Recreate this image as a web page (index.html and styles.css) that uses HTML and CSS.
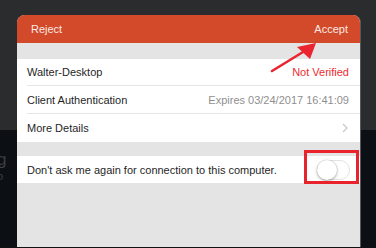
FILE: index.html
```
<!DOCTYPE html>
<html>
<head>
<meta charset="utf-8">
<link rel="stylesheet" href="styles.css">
</head>
<body>
<div class="screen">
  <div class="backdrop-top"></div>
  <div class="backdrop-bottom"><span class="ghost">g t</span><span class="ghost small">o</span></div>
  <div class="sheet">
    <div class="header">
      <span>Reject</span>
      <span>Accept</span>
    </div>
    <div class="group first">
      <div class="row"><span class="label">Walter-Desktop</span><span class="value red">Not Verified</span></div>
      <div class="row"><span class="label">Client Authentication</span><span class="value gray">Expires 03/24/2017 16:41:09</span></div>
      <div class="row last"><span class="label">More Details</span>
        <svg class="chevron" width="6" height="10" viewBox="0 0 6 10"><path d="M1 1 L5 5 L1 9" fill="none" stroke="#c7c7cc" stroke-width="1.2"/></svg>
      </div>
    </div>
    <div class="group second">
      <div class="row last"><span class="label">Don't ask me again for connection to this computer.</span>
        <span class="toggle"><span class="knob"></span></span>
      </div>
    </div>
  </div>
  <div class="highlight"></div>
  <svg class="arrow" width="376" height="248" viewBox="0 0 376 248">
    <line x1="272" y1="71" x2="303" y2="52" stroke="#ea2530" stroke-width="2.6" stroke-linecap="round"/>
    <polygon points="316,43 297,47 310,59" fill="#ea2530"/>
  </svg>
  <div class="bottom-line"></div>
</div>
</body>
</html>
```
FILE: styles.css
```
* { box-sizing: border-box; }
html, body { margin: 0; padding: 0; }
body {
  width: 376px;
  height: 248px;
  overflow: hidden;
  font-family: "Liberation Sans", Arial, sans-serif;
  background: #0c1014;
}
.screen {
  position: relative;
  width: 376px;
  height: 248px;
  display: flex;
  flex-direction: column;
}
.backdrop-top {
  height: 130px;
  background: #2b2c2e;
}
.backdrop-bottom {
  flex: 1;
  background: #0c1014;
  position: relative;
  overflow: hidden;
}
.ghost {
  position: absolute;
  left: -3px;
  top: 20px;
  color: #3c3f44;
  font-size: 17px;
  letter-spacing: 3px;
}
.ghost.small {
  top: 40px;
  left: -3px;
  font-size: 11px;
}
.sheet {
  position: absolute;
  left: 17px;
  top: 15px;
  width: 344px;
  height: 232px;
  background: #e4e4e4;
  border-radius: 8px 8px 0 0;
  overflow: hidden;
  border-right: 1px solid #55585c;
}
.header {
  height: 28px;
  background: #d24a2a;
  color: #fbe9e4;
  font-size: 11px;
  display: flex;
  align-items: center;
  justify-content: space-between;
  padding: 0 12px 0 14px;
}
.group {
  background: #fff;
  padding-left: 10px;
}
.group.first { margin-top: 16px; }
.group.second { margin-top: 14px; }
.row {
  height: 28px;
  display: flex;
  align-items: center;
  justify-content: space-between;
  padding-right: 11px;
  border-bottom: 1px solid #e6e6e6;
  font-size: 11px;
  color: #1f1f1f;
}
.group.first .row:first-child { height: 27px; }
.row.last { border-bottom: none; }
.group.second .row { height: 27px; padding-right: 10px; }
.value.red { color: #ee2b30; }
.value.gray { color: #8f8f8f; }
.chevron { margin-right: 1px; }
.toggle {
  position: relative;
  width: 33px;
  height: 20px;
  border-radius: 10px;
  border: 1px solid #e3e3e3;
  background: #fff;
}
.knob {
  position: absolute;
  left: -1px;
  top: -1px;
  width: 20px;
  height: 20px;
  border-radius: 50%;
  background: #fff;
  box-shadow: 0 1px 3px rgba(0,0,0,0.35), 0 0 0 0.5px rgba(0,0,0,0.08);
}
.highlight {
  position: absolute;
  left: 304px;
  top: 150px;
  width: 55px;
  height: 34px;
  border: 3px solid #e8232b;
}
.arrow {
  position: absolute;
  left: 0;
  top: 0;
}
.bottom-line {
  position: absolute;
  left: 0;
  bottom: 0;
  width: 376px;
  height: 1px;
  background: #111;
}
```
